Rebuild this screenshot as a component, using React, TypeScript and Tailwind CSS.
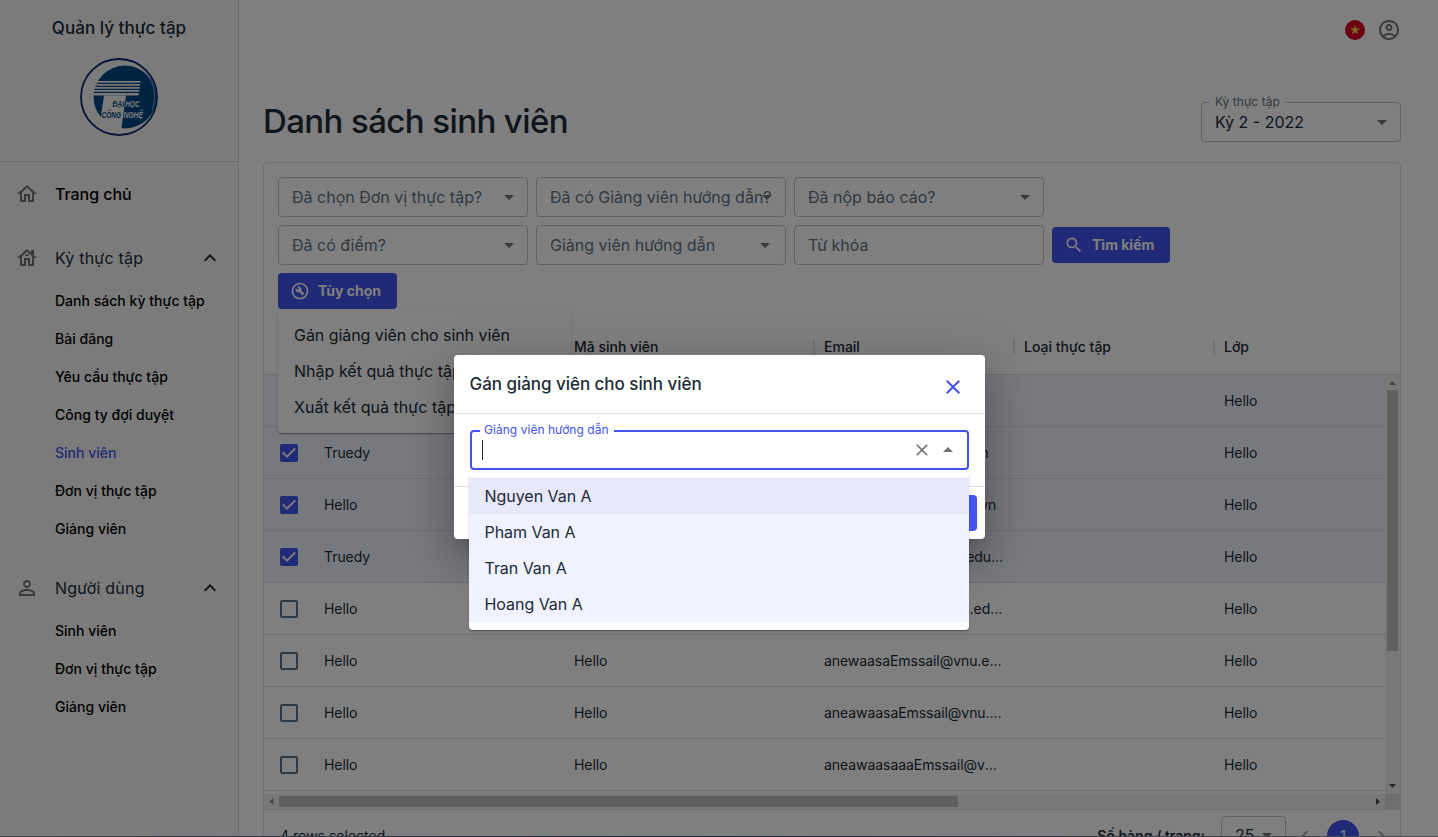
import React from 'react';
import {
  MdOutlineHome, MdOutlineHouse, MdPersonOutline, MdOutlineAccountCircle, MdOutlineBuildCircle,
  MdSearch, MdExpandLess, MdArrowDropDown, MdArrowDropUp, MdClose, MdCheckBox,
  MdCheckBoxOutlineBlank, MdChevronLeft, MdChevronRight,
} from 'react-icons/md';

function Logo() {
  return (
    <svg width="78" height="78" viewBox="0 0 78 78" className="block">
      <clipPath id="disc"><circle cx="45" cy="39" r="32" /></clipPath>
      <circle cx="39" cy="39" r="38" fill="none" stroke="#102474" strokeWidth="1.8" />
      <g clipPath="url(#disc)">
        <circle cx="45" cy="39" r="31.5" fill="#004684" />
        <path d="M24 37.5H46L41 73H8L21 58Z" fill="#f7f7f7" />
        <path d="M58 10A 33 33 0 0 1 72 52" fill="none" stroke="#c5cede" strokeWidth="0.6" />
        <g fill="#f2f2f4">
          <path d="M17 23H60.6L60.4 24.7H16.4Z" />
          <path d="M15.8 26H60.2L60 27.7H15.2Z" />
          <path d="M14.8 29H59.8L59.6 30.7H14.4Z" />
          <path d="M14.2 32H59.4L59.2 33.7H13.9Z" />
          <path d="M13.6 35H58.8L58.5 37.5H13.2Z" />
        </g>
      </g>
      <g fontFamily="Liberation Sans Narrow, Liberation Sans, sans-serif" fontWeight="700" fontStyle="italic">
        <text x="32.5" y="48.5" fontSize="8.4" fill="#004684" textLength="11.500" lengthAdjust="spacingAndGlyphs">ĐẠI</text>
        <text x="45.500" y="48.5" fontSize="8.4" fill="#f7f7f7" textLength="14" lengthAdjust="spacingAndGlyphs">HỌC</text>
        <text x="21.500" y="60.4" fontSize="9.2" fill="#004684" textLength="19.500" lengthAdjust="spacingAndGlyphs">CÔNG</text>
        <text x="43.500" y="60.4" fontSize="9.2" fill="#f7f7f7" textLength="19.500" lengthAdjust="spacingAndGlyphs">NGHỆ</text>
      </g>
    </svg>
  );
}

type GroupProps = { icon: React.ReactNode; label: string; items: string[]; active?: string };

function NavGroup({ icon, label, items, active }: GroupProps) {
  return (
    <div>
      <div className="flex h-12 items-center pl-[15px] pr-4">
        <span className="w-10 text-2xl text-[#757575]">{icon}</span>
        <span className="flex-1 text-base tracking-[0.2px] text-[#212b36]">{label}</span>
        <MdExpandLess className="size-6 text-[#212b36]" />
      </div>
      {items.map((t) => (
        <div key={t} className={`flex h-[38px] items-center pl-[55px] text-sm font-medium tracking-[0.02px] ${t === active ? 'text-[#4254ec]' : 'text-black'}`}>
          {t}
        </div>
      ))}
    </div>
  );
}

function Sidebar() {
  return (
    <aside className="flex w-[239px] shrink-0 flex-col border-r border-[#dcdcdc] bg-[#f7f7f7]">
      <div className="flex h-[162px] flex-col items-center border-b border-[#dcdcdc] pt-4">
        <div className="h-[42px] text-[17px] font-medium leading-6 tracking-[0.05px] text-[#212b36]">Quản lý thực tập</div>
        <Logo />
      </div>
      <nav className="flex flex-col gap-4 pt-2">
        <div className="flex h-12 items-center pl-[15px]">
          <span className="w-10 text-2xl text-[#757575]"><MdOutlineHome /></span>
          <span className="text-base font-medium tracking-[-0.05px] text-black">Trang chủ</span>
        </div>
        <NavGroup
          icon={<MdOutlineHouse />}
          label="Kỳ thực tập"
          active="Sinh viên"
          items={['Danh sách kỳ thực tập', 'Bài đăng', 'Yêu cầu thực tập', 'Công ty đợi duyệt', 'Sinh viên', 'Đơn vị thực tập', 'Giảng viên']}
        />
        <NavGroup icon={<MdPersonOutline />} label="Người dùng" items={['Sinh viên', 'Đơn vị thực tập', 'Giảng viên']} />
      </nav>
    </aside>
  );
}

function Filter({ label, arrow = 'select' }: { label: string; arrow?: 'select' | 'auto' | 'none' }) {
  return (
    <div className="relative flex h-10 w-[250px] items-center whitespace-nowrap rounded border border-[#c4c4c4] pl-[13px] text-base text-[#637381]">
      {label}
      {arrow === 'select' && <MdArrowDropDown className="absolute right-[6px] top-[7px] size-6 text-[#757575]" />}
      {arrow === 'auto' && <MdArrowDropDown className="absolute right-[8px] top-[7px] size-6 text-[#757575]" />}
    </div>
  );
}

const columns = [
  { t: '', w: 'w-[250px]', sep: true },
  { t: 'Mã sinh viên', w: 'w-[250px]', sep: true },
  { t: 'Email', w: 'w-[200px]', sep: true },
  { t: 'Loại thực tập', w: 'w-[200px]', sep: true },
  { t: 'Lớp', w: 'w-[171px]', sep: false },
];

const rows = [
  { on: true, name: 'Hello', mail: 'anew@vnu.edu.vn' },
  { on: true, name: 'Truedy', mail: 'anewaEmss@vnu.edu.vn' },
  { on: true, name: 'Hello', mail: 'anewsEmssc@vnu.edu.vn' },
  { on: true, name: 'Truedy', mail: 'anewaaEmssail@vnu.edu.vn' },
  { on: false, name: 'Hello', mail: 'anewaasEmssail@vnu.edu.vn' },
  { on: false, name: 'Hello', mail: 'anewaasaEmssail@vnu.edu.vn' },
  { on: false, name: 'Hello', mail: 'aneawaasaEmssail@vnu.edu.vn' },
  { on: false, name: 'Hello', mail: 'aneawaasaaaEmssail@vnu.edu.vn' },
];

function Table() {
  return (
    <div>
      <div className="flex h-14 border-b border-[#e0e0e0] pl-[50px] text-sm font-medium text-[#212b36]">
        {columns.map((c) => (
          <div key={c.t} className={`flex items-center justify-between pl-[10px] ${c.w}`}>
            <span>{c.t}</span>
            {c.sep && <span className="-mr-px h-[14px] w-[2px] bg-[#e0e0e0]" />}
          </div>
        ))}
      </div>
      <div className="flex h-[419px]">
        <div className="flex-1">
          {rows.map((r, i) => (
            <div key={i} className={`flex h-[52px] items-center border-b border-[#e0e0e0] text-sm tracking-[-0.06px] text-[#212b36] ${r.on ? 'bg-[#f0f2fd]' : ''}`}>
              <div className="flex w-[50px] justify-center">
                {r.on ? <MdCheckBox className="size-6 text-[#4254ec]" /> : <MdCheckBoxOutlineBlank className="size-6 text-[#637381]" />}
              </div>
              <div className="w-[250px] px-[10px]">{r.name}</div>
              <div className="w-[250px] px-[10px]">Hello</div>
              <div className="w-[200px] truncate px-[10px]">{r.mail}</div>
              <div className="w-[200px] px-[10px]" />
              <div className="px-[10px]">Hello</div>
            </div>
          ))}
        </div>
        <div className="flex w-[15px] flex-col items-center justify-between bg-[#f1f1f1]">
          <div className="flex flex-col items-center">
            <svg width="15" height="15"><path d="M4 10h7L7.5 6z" fill="#8a8a8a" /></svg>
            <div className="h-[261px] w-[11px] bg-[#c1c1c1]" />
          </div>
          <svg width="15" height="15"><path d="M4 5h7L7.5 9z" fill="#505050" /></svg>
        </div>
      </div>
      <div className="flex h-4 border-b border-[#e0e0e0]">
        <div className="flex flex-1 items-center justify-between bg-[#f1f1f1]">
          <div className="flex items-center">
            <svg width="15" height="15"><path d="M9.500 4v7L5.500 7.500z" fill="#8a8a8a" /></svg>
            <div className="h-[11px] w-[679px] bg-[#c1c1c1]" />
          </div>
          <svg width="15" height="15"><path d="M6 4v7L10 7.500z" fill="#505050" /></svg>
        </div>
        <div className="w-[15px] bg-[#dcdcdc]" />
      </div>
      <div className="flex h-[52px] items-center justify-between pl-4 pr-2 text-[#212b36]">
        <span className="text-sm">4 rows selected</span>
        <div className="flex items-center">
          <span className="mr-4 text-sm font-semibold">Số hàng / trang:</span>
          <div className="mr-2 flex h-10 w-[65px] items-center rounded border border-[#c4c4c4] pb-0.5 pl-[13px] text-base">
            25
            <MdArrowDropDown className="ml-px size-6 text-[#757575]" />
          </div>
          <div className="flex items-center gap-[11px]">
            <MdChevronLeft className="size-[22px] text-[#a0a0a0]" />
            <span className="flex size-8 items-center justify-center rounded-full bg-[#4254ec] text-sm text-white">1</span>
            <MdChevronRight className="size-[22px] text-[#a0a0a0]" />
          </div>
        </div>
      </div>
    </div>
  );
}

function OptionsMenu() {
  return (
    <div className="absolute left-0 top-9 z-10 w-[293px] rounded bg-white py-2 text-base tracking-[-0.06px] text-[#212b36] shadow-[0_2px_1px_-1px_rgba(0,0,0,0.2),0_1px_1px_0_rgba(0,0,0,0.14),0_1px_3px_0_rgba(0,0,0,0.12)]">
      {['Gán giảng viên cho sinh viên', 'Nhập kết quả thực tập', 'Xuất kết quả thực tập'].map((t, i) => (
        <div key={t} className={`flex h-9 items-center whitespace-nowrap px-4 ${i > 0 ? 'tracking-[0.02px]' : ''}`}>{t}</div>
      ))}
    </div>
  );
}

function Dialog() {
  return (
    <div className="relative h-[184px] w-[531px] rounded bg-white text-[#212b36] shadow-[0_11px_15px_-7px_rgba(0,0,0,0.2),0_24px_38px_3px_rgba(0,0,0,0.14),0_9px_46px_8px_rgba(0,0,0,0.12)]">
      <div className="flex h-[59px] items-center justify-between border-b border-[#e0e0e0] pl-4 pr-5">
        <span className="pt-0.5 text-[17px] font-medium tracking-[-0.04px]">Gán giảng viên cho sinh viên</span>
        <MdClose className="mt-[5px] size-6 text-[#4254ec]" />
      </div>
      <div className="h-[73px] border-b border-[#e0e0e0] px-4 pt-4">
        <div className="relative flex h-10 items-center rounded border-2 border-[#4254ec] pl-[10px] pr-[7px]">
          <span className="absolute -top-[11px] left-2 w-[134px] whitespace-nowrap bg-white pl-[4.5px] text-xs leading-[18px] tracking-[0.04px] text-[#4254ec]">Giảng viên hướng dẫn</span>
          <span className="h-5 w-px bg-[#212b36]" />
          <span className="flex-1" />
          <MdClose className="mr-1 size-5 text-[#757575]" />
          <MdArrowDropUp className="size-6 text-[#757575]" />
        </div>
      </div>
      <div className="flex justify-end p-2">
        <span className="h-9 w-16 rounded bg-[#4254ec]" />
      </div>
      <div className="absolute left-[15px] top-[115px] w-[500px] rounded bg-white py-2 text-base tracking-[-0.04px] shadow-[0_2px_1px_-1px_rgba(0,0,0,0.2),0_1px_1px_0_rgba(0,0,0,0.14),0_1px_3px_0_rgba(0,0,0,0.12)]">
        {['Nguyen Van A', 'Pham Van A', 'Tran Van A', 'Hoang Van A'].map((t, i) => (
          <div key={t} className={`flex h-9 items-center px-4 ${i === 0 ? 'bg-[#e7e8fa]' : 'bg-[#f0f2fe]'}`}>{t}</div>
        ))}
      </div>
    </div>
  );
}

export default function App() {
  return (
    <div className="relative flex h-[837px] w-[1438px] overflow-hidden bg-white font-['Inter',sans-serif]">
      <Sidebar />
      <main className="flex-1 pl-6 pr-[37px]">
        <div className="flex h-[60px] items-center justify-end gap-3">
          <svg width="20" height="20" viewBox="0 0 20 20">
            <circle cx="10" cy="10" r="10" fill="#d80027" />
            <path d="M10 5l1.170 3.590h3.780l-3.060 2.220 1.170 3.590L10 12.180 6.940 14.400l1.170-3.590-3.060-2.220h3.780z" fill="#ffda44" />
          </svg>
          <MdOutlineAccountCircle className="size-6 text-[#757575]" />
        </div>
        <div className="flex h-[102px] items-start justify-between">
          <h1 className="pt-10 text-[33px] font-medium leading-[42px] tracking-[-0.6px] text-[#212b36]">Danh sách sinh viên</h1>
          <div className="relative mt-[42px] flex h-10 w-[200px] items-center rounded border border-[#c4c4c4] pl-[13px] text-base text-[#212b36]">
            <span className="absolute -top-[10px] left-2 bg-white px-[5px] text-xs leading-[18px] tracking-[0.03px] text-[#637381]">Kỳ thực tập</span>
            Kỳ 2 - 2022
            <MdArrowDropDown className="absolute right-[6px] top-[7px] size-6 text-[#757575]" />
          </div>
        </div>
        <section className="rounded border border-[#e0e0e0]">
          <div className="flex flex-col gap-2 px-[14px] pb-[10px] pt-[14px]">
            <div className="flex gap-2">
              <Filter label="Đã chọn Đơn vị thực tập?" />
              <Filter label="Đã có Giảng viên hướng dẫn?" />
              <Filter label="Đã nộp báo cáo?" />
            </div>
            <div className="flex items-center gap-2">
              <Filter label="Đã có điểm?" />
              <Filter label="Giảng viên hướng dẫn" arrow="auto" />
              <Filter label="Từ khóa" arrow="none" />
              <button className="flex h-9 w-[118px] items-center rounded bg-[#4254ec] pl-3 text-sm font-bold text-white">
                <MdSearch className="mr-2 size-5" />
                Tìm kiếm
              </button>
            </div>
            <div className="relative">
              <button className="flex h-9 w-[119px] items-center rounded bg-[#4254ec] pl-3 text-sm font-bold text-white">
                <MdOutlineBuildCircle className="mr-2 size-5" />
                Tùy chọn
              </button>
              <OptionsMenu />
            </div>
          </div>
          <Table />
        </section>
      </main>
      <div className="absolute inset-x-0 top-0 z-20 flex h-[894px] items-center justify-center bg-black/50">
        <Dialog />
      </div>
      <div className="absolute inset-x-0 bottom-0 z-30 h-px bg-linear-to-r from-[#3d4850] via-[#1d2836] to-[#4a4f55]" />
    </div>
  );
}
